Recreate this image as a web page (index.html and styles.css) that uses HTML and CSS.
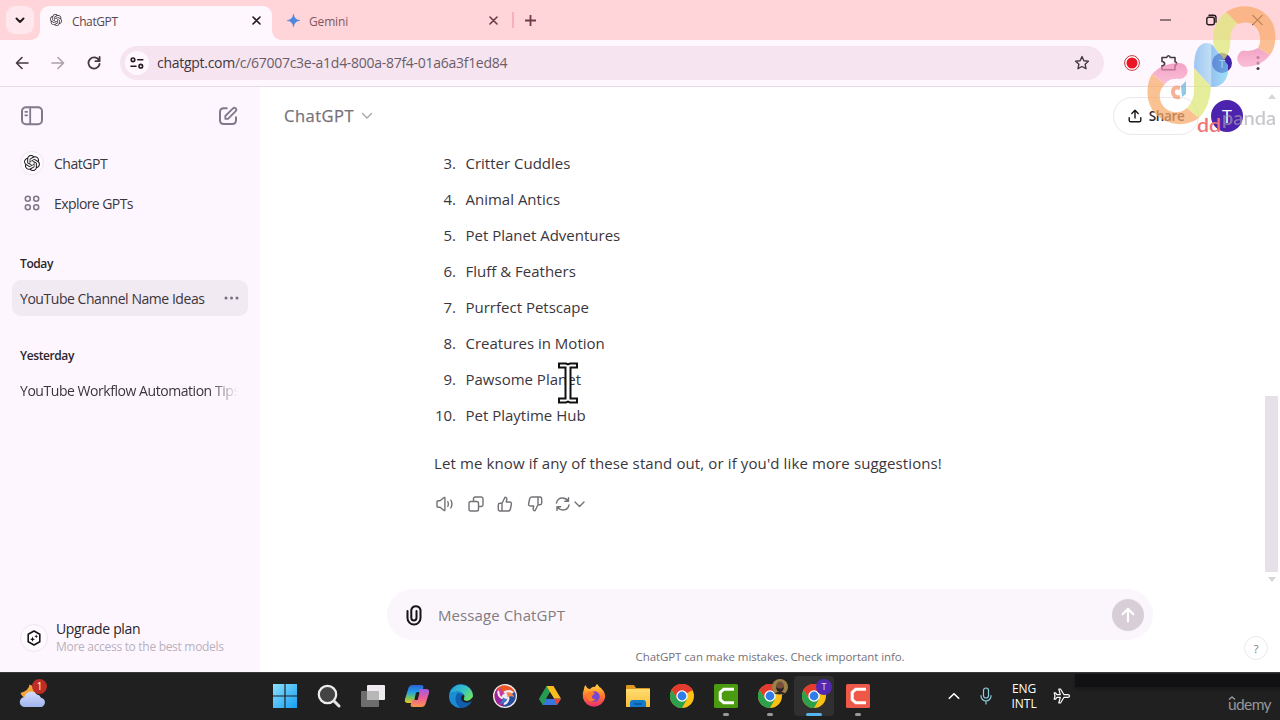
FILE: index.html
```html
<!DOCTYPE html>
<html lang="en">
<head>
<meta charset="utf-8">
<title>ChatGPT</title>
<link rel="stylesheet" href="styles.css">
</head>
<body>
<svg class="defs" width="0" height="0">
  <defs>
    <symbol id="knot" viewBox="0 0 24 24"><path fill="currentColor" d="M22.2819 9.8211a5.9847 5.9847 0 0 0-.5157-4.9108 6.0462 6.0462 0 0 0-6.5098-2.9A6.0651 6.0651 0 0 0 4.9807 4.1818a5.9847 5.9847 0 0 0-3.9977 2.9 6.0462 6.0462 0 0 0 .7427 7.0966 5.98 5.98 0 0 0 .511 4.9107 6.051 6.051 0 0 0 6.5146 2.9001A5.9847 5.9847 0 0 0 13.2599 24a6.0557 6.0557 0 0 0 5.7718-4.2058 5.9894 5.9894 0 0 0 3.9977-2.9001 6.0557 6.0557 0 0 0-.7475-7.0729zm-9.022 12.6081a4.4755 4.4755 0 0 1-2.8764-1.0408l.1419-.0804 4.7783-2.7582a.7948.7948 0 0 0 .3927-.6813v-6.7369l2.02 1.1686a.071.071 0 0 1 .038.052v5.5826a4.504 4.504 0 0 1-4.4945 4.4944zm-9.6607-4.1254a4.4708 4.4708 0 0 1-.5346-3.0137l.142.0852 4.783 2.7582a.7712.7712 0 0 0 .7806 0l5.8428-3.3685v2.3324a.0804.0804 0 0 1-.0332.0615L9.74 19.9502a4.4992 4.4992 0 0 1-6.1408-1.6464zM2.3408 7.8956a4.485 4.485 0 0 1 2.3655-1.9728V11.6a.7664.7664 0 0 0 .3879.6765l5.8144 3.3543-2.0201 1.1685a.0757.0757 0 0 1-.071 0l-4.8303-2.7865A4.504 4.504 0 0 1 2.3408 7.872zm16.5963 3.8558L13.1038 8.364 15.1192 7.2a.0757.0757 0 0 1 .071 0l4.8303 2.7913a4.4944 4.4944 0 0 1-.6765 8.1042v-5.6772a.79.79 0 0 0-.407-.667zm2.0107-3.0231l-.142-.0852-4.7735-2.7818a.7759.7759 0 0 0-.7854 0L9.409 9.2297V6.8974a.0662.0662 0 0 1 .0284-.0615l4.8303-2.7866a4.4992 4.4992 0 0 1 6.6802 4.66zM8.3065 12.863l-2.02-1.1638a.0804.0804 0 0 1-.038-.0567V6.0742a4.4992 4.4992 0 0 1 7.3757-3.4537l-.142.0805L8.704 5.459a.7948.7948 0 0 0-.3927.6813zm1.0976-2.3654l2.602-1.4998 2.6069 1.4998v2.9994l-2.5974 1.4997-2.6067-1.4997Z"/></symbol>
    <symbol id="chrome" viewBox="0 0 24 24">
      <circle cx="12" cy="12" r="12" fill="#fbc116"/>
      <path d="M12 12 1.6 6A12 12 0 0 1 22.4 6Z" fill="#e33b2e"/>
      <path d="M12 6.5H22.7A12 12 0 0 0 1.6 6L7 14.5Z" fill="#e33b2e"/>
      <path d="M1.6 6A12 12 0 0 0 12 24L17 15 7.2 14.7Z" fill="#2da04c"/>
      <circle cx="12" cy="12" r="5.7" fill="#fff"/><circle cx="12" cy="12" r="4.4" fill="#2f7de8"/>
    </symbol>
    <symbol id="camtasia" viewBox="0 0 24 24">
      <rect width="24" height="24" rx="1.5" fill="currentColor"/>
      <path d="M20 5.200H9.800L6.200 8.500v7l3.600 3.300H20" fill="none" stroke="#fff" stroke-width="3"/>
    </symbol>
    <linearGradient id="gWin" x2="1" y2="1"><stop stop-color="#8be0fb"/><stop offset="1" stop-color="#169df3"/></linearGradient>
    <linearGradient id="gCloud" x2="0" y2="1"><stop stop-color="#d3dcfb"/><stop offset="1" stop-color="#9fb5ef"/></linearGradient>
    <linearGradient id="gCopA" x2="0" y2="1"><stop stop-color="#2a62d8"/><stop offset=".4" stop-color="#23a1e6"/><stop offset=".7" stop-color="#72c267"/><stop offset="1" stop-color="#f2c11e"/></linearGradient>
    <linearGradient id="gCopB" x2="0" y2="1"><stop stop-color="#a25be5"/><stop offset=".5" stop-color="#ed5c98"/><stop offset="1" stop-color="#fb974c"/></linearGradient>
    <linearGradient id="gEdge" x2="1" y2=".5"><stop stop-color="#2397dd"/><stop offset=".6" stop-color="#35c1c6"/><stop offset="1" stop-color="#6bdd6b"/></linearGradient>
    <linearGradient id="gFox" x2="0" y2="1"><stop stop-color="#ffdd3c"/><stop offset=".5" stop-color="#ff7a2a"/><stop offset="1" stop-color="#ed2d70"/></linearGradient>
    <linearGradient id="gFolder" x2="0" y2="1"><stop stop-color="#ffdd6f"/><stop offset="1" stop-color="#f6bd3c"/></linearGradient>
  </defs>
</svg>

<div class="screen">
  <header class="tabstrip">
    <button class="tab-search"><svg width="10" height="7" viewBox="0 0 10 7"><path d="M1.500 1.500 5 5l3.500-3.500" class="ln dark w2"/></svg></button>
    <div class="tab active">
      <svg class="favicon" width="12" height="12"><use href="#knot"/></svg>
      <span class="tab-title">ChatGPT</span>
      <svg class="tab-close" width="9" height="9" viewBox="0 0 9 9"><path d="m1 1 7 7M8 1 1 8" class="ln dark w16"/></svg>
    </div>
    <div class="tab idle">
      <svg class="favicon" width="13" height="13" viewBox="0 0 14 14"><path d="M7 0C7.4 4.2 9.8 6.6 14 7 9.8 7.4 7.4 9.8 7 14 6.600 9.800 4.200 7.400 0 7 4.200 6.600 6.600 4.200 7 0Z" fill="#4f86dc" stroke="#4f86dc" stroke-width=".5"/></svg>
      <span class="tab-title">Gemini</span>
      <svg class="tab-close" width="9" height="9" viewBox="0 0 9 9"><path d="m1 1 7 7M8 1 1 8" class="ln maroon w16"/></svg>
    </div>
    <i class="tab-rule"></i>
    <svg class="newtab" width="11" height="11" viewBox="0 0 11 11"><path d="M5.500 .5v10M.5 5.500h10" class="ln maroon w18"/></svg>
    <div class="window-buttons">
      <svg width="11" height="12" viewBox="0 0 11 12"><path d="M.5 6h10" class="ln dark w12"/></svg>
      <svg width="11" height="12" viewBox="0 0 11 12"><rect x=".8" y="3.200" width="7.500" height="7.500" rx="1.800" class="ln dark w14"/><path d="M3 1.200h4.500Q10 1.200 10 3.800V8.300" class="ln dark w14"/></svg>
      <svg width="11" height="12" viewBox="0 0 11 12"><path d="m.8 1.300 9.400 9.400m0-9.400L.8 10.700" class="ln dark w12"/></svg>
    </div>
  </header>

  <div class="toolbar">
    <svg class="nav" width="14" height="14" viewBox="0 0 14 14"><path d="M13 7H1.500M7 1.500 1.500 7 7 12.500" class="ln tool w16"/></svg>
    <svg class="nav" width="14" height="14" viewBox="0 0 14 14"><path d="M1 7h11.500M7 1.500 12.500 7 7 12.500" class="ln faint w16"/></svg>
    <svg class="nav" width="14" height="14" viewBox="0 0 14 14"><path d="M12 4.200A5.600 5.600 0 1 0 12.600 8M12.600 1v4.200H8.400" class="ln tool w18"/></svg>
    <div class="omnibox">
      <span class="site-info"><svg width="14" height="12" viewBox="0 0 14 12"><circle cx="3" cy="2.800" r="1.800" class="ln dark w16"/><path d="M7.800 2.800h5M1 9.200h5" class="ln dark w16"/><circle cx="10.800" cy="9.200" r="1.800" class="ln dark w16"/></svg></span>
      <span class="url"><b>chatgpt.com</b>/c/67007c3e-a1d4-800a-87f4-01a6a3f1ed84</span>
      <svg class="star" width="16" height="16" viewBox="0 0 16 16"><path d="m8 1.600 1.900 4.100 4.500.5-3.300 3 .9 4.500L8 11.500l-4 2.200.9-4.500-3.300-3 4.500-.5Z" class="ln tool w14"/></svg>
    </div>
    <div class="extensions">
      <svg width="16" height="16" viewBox="0 0 16 16"><circle cx="8" cy="8" r="7.400" fill="#fff" stroke="#c8353f"/><circle cx="8" cy="8" r="5.500" fill="#ec1525"/></svg>
      <svg width="18" height="18" viewBox="0 0 18 18"><path d="M2 3.500h4.800q.2-1.800 1.700-1.800t1.700 1.800H15v4.300q1.700.2 1.700 1.700T15 11.200v4.600H2v-3.900q2.600-.2 2.600-2.200T2 7.500Z" class="ln tool w16"/></svg>
      <span class="profile">T</span>
      <svg width="4" height="16" viewBox="0 0 4 16"><g fill="#45393f"><circle cx="2" cy="2.500" r="1.500"/><circle cx="2" cy="8" r="1.500"/><circle cx="2" cy="13.500" r="1.500"/></g></svg>
    </div>
  </div>

  <div class="page">
    <aside class="sidebar">
      <div class="side-top">
        <svg width="22" height="20" viewBox="0 0 22 20"><rect x="1" y="1.200" width="20" height="17" rx="4" class="ln grey w2"/><path d="M9.200 1.500v16.500" class="ln grey w18"/><path d="M4.300 5.800h1.800M4.300 9.300h1.800" class="ln grey w18"/></svg>
        <svg width="20" height="20" viewBox="0 0 20 20"><path d="M8.700 2.300H5.800Q2 2.300 2 6v8.300Q2 18 5.800 18h8.400Q18 18 18 14.300v-3" class="ln grey w2"/><path d="M7.300 12.800V10l7.700-7.600a1.900 1.900 0 0 1 2.700 2.700L10 12.800Z" class="ln grey w18"/></svg>
      </div>
      <div class="side-link"><span class="ring small"><svg width="16" height="16"><use href="#knot"/></svg></span>ChatGPT</div>
      <div class="side-link second"><span class="ring bare"><svg width="16" height="16" viewBox="0 0 16 16"><g class="ln grey w16"><circle cx="3.800" cy="3.800" r="2.500"/><circle cx="12.200" cy="3.800" r="2.500"/><circle cx="3.800" cy="12.200" r="2.500"/><circle cx="12.200" cy="12.200" r="2.500"/></g></svg></span><span class="explore">Explore GPTs</span></div>
      <h3 class="group">Today</h3>
      <div class="chat selected"><span>YouTube Channel Name Ideas</span><svg width="15" height="4" viewBox="0 0 15 4"><g fill="#777079"><circle cx="2" cy="2" r="1.500"/><circle cx="7.500" cy="2" r="1.500"/><circle cx="13" cy="2" r="1.500"/></g></svg></div>
      <h3 class="group later">Yesterday</h3>
      <div class="chat cut"><span>YouTube Workflow Automation Tips</span></div>
      <div class="upgrade">
        <span class="ring large"><svg width="16" height="16" viewBox="0 0 16 16"><path d="m8 1 5.800 3.200v7.600L8 15l-5.800-3.200V4.200Z" class="ln black w16"/><path d="M6.500 6.500 7.200 8.400 9 9.200 7.200 10 6.500 11.800 5.800 10 4 9.200 5.800 8.400ZM10.200 4.400l.5 1.300 1.300.6-1.300.6-.5 1.300-.5-1.300-1.300-.6 1.300-.6Z" fill="#111"/></svg></span>
        <div><p class="up-title">Upgrade plan</p><p class="up-sub">More access to the best models</p></div>
      </div>
    </aside>

    <main class="main">
      <div class="main-head">
        <span class="model">ChatGPT</span>
        <svg class="chev" width="12" height="8" viewBox="0 0 12 8"><path d="m1.500 1.500 4.500 4.500 4.500-4.500" class="ln lightgrey w14"/></svg>
        <span class="share"><svg width="14" height="14" viewBox="0 0 14 14"><path d="M7 9V1.500M3.800 4.500 7 1.300l3.200 3.200M1.200 8.800v2.400q0 1.600 1.600 1.600h8.400q1.600 0 1.600-1.600V8.800" class="ln black w14"/></svg><span>Share</span></span>
        <span class="avatar">T</span>
      </div>
      <div class="answer">
        <ol class="names">
          <li><i>3.</i><span>Critter Cuddles</span></li>
          <li><i>4.</i><span>Animal Antics</span></li>
          <li><i>5.</i><span>Pet Planet Adventures</span></li>
          <li><i>6.</i><span>Fluff &amp; Feathers</span></li>
          <li><i>7.</i><span>Purrfect Petscape</span></li>
          <li><i>8.</i><span>Creatures in Motion</span></li>
          <li><i>9.</i><span>Pawsome Planet</span></li>
          <li><i>10.</i><span>Pet Playtime Hub</span></li>
        </ol>
        <p class="closing">Let me know if any of these stand out, or if you'd like more suggestions!</p>
        <div class="actions">
          <svg width="18" height="16" viewBox="0 0 18 16"><path d="M1 5.800Q1 4.700 2.200 4.700h1.900L8 1.500q.9-.5.9.6v11.800q0 1.100-.9.600l-3.900-3.200H2.200Q1 11.300 1 10.200Z" class="ln mid w14"/><path d="M11.800 5.500q1.300 2.500 0 5M14.800 4q2.200 4 0 8" class="ln mid w14"/></svg>
          <svg width="16" height="16" viewBox="0 0 16 16"><rect x="1" y="5.500" width="9.500" height="9.500" rx="1.800" class="ln mid w14"/><path d="M5.500 5.300V2.800Q5.500 1 7.300 1h6Q15 1 15 2.800v6q0 1.700-1.700 1.700h-2.500" class="ln mid w14"/></svg>
          <svg width="16" height="16" viewBox="0 0 16 16"><path d="M5 7.300 8 1.200q2 .1 1.800 2.300L9.300 6h3.400q2 .2 1.700 2l-1 5q-.4 2-2.300 2H3Q1.300 15 1.300 13.300V9Q1.300 7.300 3 7.300ZM5 7.300V15" class="ln mid w14"/></svg>
          <svg width="16" height="16" viewBox="0 0 16 16"><path d="M11 8.700 8 14.800q-2-.1-1.800-2.300L6.700 10H3.300q-2-.2-1.700-2l1-5q.4-2 2.300-2H13q1.700 0 1.700 1.700V7q0 1.700-1.700 1.700ZM11 8.700V1" class="ln mid w14"/></svg>
          <svg width="30" height="16" viewBox="0 0 30 16"><path d="M1.500 7Q2.500 2 7.500 2q3.500 0 5.700 3M13.500 1.600v3.700H9.800M14 9q-1 5-6 5-3.500 0-5.700-3M2 14.400v-3.700h3.700M20 6l4.500 4.500L29 6" class="ln mid w14"/></svg>
        </div>
      </div>
      <div class="composer">
        <svg width="18" height="22" viewBox="0 0 18 22"><path d="M2.500 7v7a6.500 6.500 0 0 0 13 0V6a4.700 4.700 0 0 0-9.200 0v7.800a2.600 2.600 0 0 0 5.200 0V7" class="ln black w2"/></svg>
        <span class="placeholder">Message ChatGPT</span>
        <span class="send"><svg width="14" height="16" viewBox="0 0 14 16"><path d="M7 14.500V2M1.600 7.200 7 1.800l5.400 5.400" class="ln white w22"/></svg></span>
      </div>
      <p class="notice">ChatGPT can make mistakes. Check important info.</p>
      <span class="help">?</span>
      <div class="scrollbar"></div>
      <svg class="arrow up" width="8" height="5" viewBox="0 0 8 5"><path d="M4 0 8 5H0Z" fill="#d9d4da"/></svg>
      <svg class="arrow down" width="8" height="5" viewBox="0 0 8 5"><path d="M4 5 8 0H0Z" fill="#d9d4da"/></svg>
    </main>
  </div>

  <footer class="taskbar">
    <div class="weather">
      <svg width="32" height="32" viewBox="0 0 32 32"><path d="M11.500 4.500q-.5 6-9 8.500 2 6 9 5 6-1.500 6-7-1-5-6-6.500Z" fill="#f1a63a"/><path d="M7 27a5 5 0 0 1-.5-10A7 7 0 0 1 19 14.500a5 5 0 0 1 4 3.200A4.700 4.700 0 0 1 21.500 27Z" fill="url(#gCloud)"/></svg>
      <span class="count">1</span>
    </div>
    <div class="apps">
      <span class="app"><svg width="24" height="24" viewBox="0 0 24 24"><path d="M0 0h11.400v11.400H0ZM12.600 0H24v11.400H12.600ZM0 12.600h11.400V24H0ZM12.600 12.600H24V24H12.600Z" fill="url(#gWin)"/></svg></span>
      <span class="app"><svg width="24" height="24" viewBox="0 0 24 24"><circle cx="10.500" cy="10.500" r="8.700" fill="#444" stroke="#eee" stroke-width="2.200"/><path d="m17 17 5 5" class="ln silver w3"/></svg></span>
      <span class="app"><svg width="24" height="24" viewBox="0 0 24 24"><rect x="6" y="1" width="18" height="15" rx="1" fill="#eeeaf0"/><rect x="0" y="7" width="18" height="16" rx="1" fill="#6d6d6d"/><path d="M6 7h12v9H6Z" fill="#b7b7b7"/></svg></span>
      <span class="app"><svg width="26" height="26" viewBox="0 0 26 26"><path d="M8.500 2H17q3 0 2.200 3L17.500 9H13l-3 11H4q-4 0-3-4L4.500 5Q5.500 2 8.500 2Z" fill="url(#gCopA)"/><path d="M17.500 24H9q-3 0-2.200-3L8.500 17H13l3-11h6q4 0 3 4l-3.500 11q-1 3-4 3Z" fill="url(#gCopB)"/><path d="m12 9.500-1.600 7.200h3.400l1.700-7.200Z" fill="#202020"/></svg></span>
      <span class="app"><svg width="24" height="24" viewBox="0 0 24 24"><circle cx="12" cy="12" r="12" fill="#0f5fae"/><path d="M.3 10A12 12 0 0 1 24 12q-.5 5-6 5-5-.5-3.500-3.500Q16 9 10 7.500 4 7 .3 10Z" fill="url(#gEdge)"/><path d="M8.300 9Q3.500 17 11 23.900-1 22 .2 10.500 3 7.500 8.300 7.700 14 8 15.200 11.500 12 8.500 8.300 9Z" fill="#1b8dd6"/><path d="M23.300 17q-7.300 3.700-11-1-1.300-3.500 2.200-5.500 1.500 1 .7 3Q13.700 17 18 17q3-.2 6-4 .3 2-.7 4Z" fill="#202020"/></svg></span>
      <span class="app"><svg width="24" height="24" viewBox="0 0 24 24"><circle cx="12" cy="12" r="12" fill="#f3e9f2"/>
        <path id="blade" d="M3.500 5.500A10.700 10.700 0 0 1 22.500 11Q19 4.500 13 6.500 9.500 7.500 9.800 11 6.500 6.500 3.500 5.500Z" fill="#e95828"/>
        <use href="#blade" class="violet" transform="rotate(-120 12 12)"/>
        <path d="M3.500 5.500A10.700 10.700 0 0 1 22.500 11Q19 4.500 13 6.500 9.500 7.500 9.800 11 6.500 6.500 3.500 5.500Z" fill="#9b239c" transform="rotate(-120 12 12)"/>
        <path d="M3.500 5.500A10.700 10.700 0 0 1 22.500 11Q19 4.500 13 6.500 9.500 7.500 9.800 11 6.500 6.500 3.500 5.500Z" fill="#254f9e" transform="rotate(120 12 12)"/>
        <path d="M13 8.500q6-1.500 8.500 5-3.500-2.500-7.300-.3Q15 10 13 8.500Z" fill="#f08345"/>
        <path d="M13 8.500q6-1.500 8.500 5-3.500-2.500-7.300-.3Q15 10 13 8.500Z" fill="#c43aa0" transform="rotate(-120 12 12)"/>
        <path d="M13 8.500q6-1.500 8.500 5-3.500-2.500-7.300-.3Q15 10 13 8.500Z" fill="#3d78c4" transform="rotate(120 12 12)"/></svg></span>
      <span class="app"><svg width="22" height="22" viewBox="0 0 22 22"><path d="M7.500 1h7L11 7.200 4 20 0 13.800Z" fill="#259b4e"/><path d="M7.500 1h7L22 13.800h-7Z" fill="#f9bd20"/><path d="M0 13.800h22L18 20H4Z" fill="#3775e0"/><path d="M0 13.800h7.500L4 20Z" fill="#259b4e"/><path d="M15 13.800h7L18 20Z" fill="#e94235"/><path d="M11 7.200 15 13.800H7Z" fill="#202020"/></svg></span>
      <span class="app"><svg width="24" height="24" viewBox="0 0 24 24"><path d="M2 5q0-2 1.500-4Q5 5 8 5q3-3 5-2 1-2 2-3 2 3 4 4 5 5 4 10A11.300 11.300 0 0 1 1 14q-1-5 1-9Z" fill="url(#gFox)"/><circle cx="12.500" cy="12.500" r="5.200" fill="#7846d4"/><path d="M5 9q4-3 8 0l-3 3q0 4 4 3-4 4-8 1-2-3-1-7Z" fill="#ff7d26"/></svg></span>
      <span class="app"><svg width="24" height="24" viewBox="0 0 24 24"><path d="M0 2q0-1 1-1h7l2 3h13q1 0 1 1v18H0Z" fill="#dd9620"/><path d="M0 5h24v18H0Z" fill="url(#gFolder)"/><path d="M4 23v-4q0-3 3-3h10q3 0 3 3v4Z" fill="#1279cc"/><path d="M8 20h8" stroke="#0a5299" stroke-width="1.500"/></svg></span>
      <span class="app"><svg width="24" height="24"><use href="#chrome"/></svg></span>
      <span class="app running green"><svg width="24" height="24"><use href="#camtasia"/></svg></span>
      <span class="app running"><svg width="24" height="24"><use href="#chrome"/></svg><svg class="face" width="16" height="16" viewBox="0 0 16 16"><circle cx="8" cy="8" r="8" fill="#9b8149"/><ellipse cx="8" cy="7.500" rx="4" ry="5" fill="#77503d"/><path d="M4 8q4 3 8 0-.5 5-4 5T4 8ZM2 15q6-5 12 0Z" fill="#302421"/></svg></span>
      <span class="app running current"><svg width="24" height="24"><use href="#chrome"/></svg><b class="mini">T</b></span>
      <span class="app running red"><svg width="24" height="24"><use href="#camtasia"/></svg></span>
    </div>
    <div class="tray">
      <svg width="12" height="8" viewBox="0 0 12 8"><path d="m1.300 6.300 4.700-4.600 4.700 4.600" class="ln white w16"/></svg>
      <svg class="mic" width="12" height="18" viewBox="0 0 12 18"><rect x="3.500" y="1" width="5" height="10" rx="2.500" class="ln cyan w12"/><path d="M1 8.500v.5a5 5 0 0 0 10 0v-.5M6 14v3" class="ln cyan w12"/></svg>
      <span class="lang">ENG<br>INTL</span>
      <svg class="plane" width="18" height="16" viewBox="0 0 18 16"><path d="M16.500 8q0-1.300-1.800-1.300H11L7.500 1H5.800l1.500 5.700H4L2.500 4.800H1.200L2 8l-.8 3.200h1.300L4 9.300h3.300L5.800 15h1.700L11 9.300h3.700Q16.500 9.300 16.500 8Z" class="ln white w12"/></svg>
    </div>
    <div class="masked"></div>
    <span class="udemy">udemy<svg width="8" height="4" viewBox="0 0 8 4"><path d="M1 3.500 4 1l3 2.500" fill="none" stroke="#969696" stroke-width="1.500"/></svg></span>
  </footer>

  <svg class="brand" width="150" height="136" viewBox="1130 0 150 136">
    <defs>
      <linearGradient id="bBlue"><stop stop-color="#7bb4f2"/><stop offset=".5" stop-color="#a9d5ef"/><stop offset=".52" stop-color="#6fb0ee"/><stop offset="1" stop-color="#7dd6f5"/></linearGradient>
      <linearGradient id="bPink" x2="0" y2="1"><stop stop-color="#ef83b0"/><stop offset="1" stop-color="#f7abc7"/></linearGradient>
    </defs>
    <g opacity=".72">
      <path d="M1226 12 1238 23Q1230 29 1230.500 38 1231 52 1224 60L1214 47Q1209 26 1226 12Z" fill="#dfe876"/>
      <path d="M1226 12C1242 1 1265 6 1273 24 1277 36 1276 47 1270 55L1258 48C1264 37 1257 23 1247 22.500Q1242 22 1238 24Z" fill="#f9aa6a"/>
      <path d="M1258 48 1270 55Q1261 67 1245 67A8.500 8.500 0 0 1 1243 50.500Q1252 52 1258 48Z" fill="url(#bPink)"/>
      <path d="M1194 68Q1194 44 1206 43 1212 43 1214 47L1224 60 1228 65V73Q1225 87 1211 87Z" fill="url(#bBlue)"/>
      <path d="M1194 68 1211 87Q1210 107 1199 118L1187 108Q1194 101 1194 90Z" fill="#dfe876"/>
      <path d="M1187 108 1199 118Q1189 125 1177 124 1153 121 1148 99 1146 84 1152 74L1165 84A15 15 0 0 0 1187 108Z" fill="#f9aa6a"/>
      <path d="M1152 74Q1162 63 1179 63A8 8 0 0 1 1180 79Q1169 78 1165 84Z" fill="url(#bPink)"/>
      <path d="M1180 88Q1173 86 1173 92T1180 97" fill="none" stroke="#f19770" stroke-width="4"/><path d="M1181 86 1186 81V94L1182 97Z" fill="#65b5dc"/>
    </g>
    <text x="1197" y="132" class="brand-text" textLength="24" lengthAdjust="spacingAndGlyphs" fill="#f07272">dd</text>
    <text x="1222" y="125" class="brand-text" textLength="54" lengthAdjust="spacingAndGlyphs" fill="#aaa5ad" opacity=".62">panda</text>
  </svg>
  <svg class="caret" width="20" height="42" viewBox="0 0 20 42"><path d="M1 1.500h7l2 1 2-1h7v4h-6.500v31H19v4h-7l-2-1-2 1H1v-4h6.500v-31H1Z" fill="#fff" stroke="#111" stroke-width="2"/></svg>
</div>
</body>
</html>
```
FILE: styles.css
```css
* { box-sizing: border-box; }
body { margin: 0; font-family: "Open Sans", "Noto Sans", sans-serif; color: #3b363c; }
p, h3, ol { margin: 0; padding: 0; }
svg { display: block; flex: none; }
button { border: 0; padding: 0; }
.defs { position: absolute; }
.screen { position: relative; width: 1280px; height: 720px; overflow: hidden; display: flex; flex-direction: column; background: #fff; }

.ln { fill: none; stroke-linecap: round; stroke-linejoin: round; }
.dark { stroke: #251a20; } .maroon { stroke: #6d3c46; } .tool { stroke: #45393f; } .faint { stroke: #aaa0a9; }
.grey { stroke: #81798a; } .lightgrey { stroke: #aaa6ab; } .mid { stroke: #747176; } .black { stroke: #141414; }
.white { stroke: #fff; } .silver { stroke: #e5e5e5; } .cyan { stroke: #8ed0dc; }
.w12 { stroke-width: 1.2; } .w14 { stroke-width: 1.4; } .w16 { stroke-width: 1.6; } .w18 { stroke-width: 1.8; }
.w2 { stroke-width: 2; } .w22 { stroke-width: 2.2; } .w3 { stroke-width: 3; }

/* browser window */
.tabstrip { height: 40px; background: #ffd5d9; display: flex; align-items: center; flex: none; }
.tab-search { width: 28px; height: 28px; margin: 0 6px; border-radius: 9px; background: #ffe8ed; display: grid; place-items: center; }
.tab { display: flex; align-items: center; }
.tab.active { position: relative; width: 232px; height: 34px; margin-top: 6px; padding: 0 11px 6px 10px; border-radius: 9px 9px 0 0; background: #fff7fe; }
.tab.active::before, .tab.active::after { content: ""; position: absolute; bottom: 0; width: 9px; height: 9px; }
.tab.active::before { left: -9px; background: radial-gradient(circle at 0 0, transparent 8.5px, #fff7fe 9px); }
.tab.active::after { right: -9px; background: radial-gradient(circle at 100% 0, transparent 8.5px, #fff7fe 9px); }
.tab-title { font-size: 12px; margin-left: 10px; padding-top: 2px; letter-spacing: -.4px; color: #544750; }
.tab.idle { width: 226px; padding-left: 15px; }
.idle .tab-title { color: #83575f; margin-left: 9px; letter-spacing: -.15px; }
.tab-close { margin-left: auto; }
.tab-rule { width: 2px; height: 16px; margin-left: 14px; background: #f9b0bd; }
.newtab { margin-left: 10.500px; }
.window-buttons { margin-left: auto; margin-right: 17.500px; display: flex; gap: 35px; }
.toolbar { height: 47px; flex: none; background: #fff7fe; border-bottom: 1px solid #e6dce6; display: flex; align-items: center; padding: 0 20px 0 15px; }
.nav { margin-right: 22px; }
.omnibox { width: 985px; height: 34px; margin-left: -3px; border-radius: 17px; background: #f6e5f1; display: flex; align-items: center; padding: 0 14px 0 5px; }
.site-info { width: 24px; height: 24px; border-radius: 50%; background: #fff7fe; display: grid; place-items: center; }
.url { font-size: 14px; letter-spacing: -.28px; margin-left: 8px; padding-bottom: 1px; color: #6b5d68; }
.url b { font-weight: 400; color: #40353d; }
.star { margin-left: auto; }
.extensions { display: flex; align-items: center; margin-left: 20px; }
.extensions > :nth-child(2) { margin-left: 20px; }
.profile { width: 20px; height: 20px; margin: 0 24px 0 34px; border-radius: 50%; background: #3e27a9; color: #fff; font-size: 11px; display: grid; place-items: center; }

/* conversation list */
.page { height: 585px; display: flex; }
.sidebar { width: 260px; background: #fdf6ff; display: flex; flex-direction: column; padding: 19px 12px 17px; font-size: 14px; letter-spacing: -.45px; }
.side-top { height: 20px; display: flex; justify-content: space-between; padding: 0 10px 0 9px; }
.side-link { height: 40px; display: flex; align-items: center; gap: 10px; padding-left: 8px; margin-top: 17px; }
.side-link.second { margin-top: 0; }
.explore { letter-spacing: -.58px; padding-top: 1px; }
.ring { display: grid; place-items: center; border: 1px solid #eee5ef; border-radius: 50%; background: #fffaff; color: #222; }
.small { width: 24px; height: 24px; } .bare { width: 24px; height: 24px; border: 0; background: none; } .large { width: 28px; height: 28px; }
.group { margin: 32px 8px 0; height: 18px; font-size: 12px; line-height: 18px; font-weight: 600; letter-spacing: -.4px; color: #29242a; }
.chat { height: 36px; margin-top: 7px; padding: 0 9px 0 8px; border-radius: 9px; display: flex; align-items: center; justify-content: space-between; white-space: nowrap; }
.selected { background: #f1eaf3; }
.group.later { margin-top: 31px; }
.chat.cut { margin-top: 7px; }
.cut span { width: 230px; flex: none; -webkit-mask-image: linear-gradient(90deg, #000 190px, transparent 218px); mask-image: linear-gradient(90deg, #000 190px, transparent 218px); }
.upgrade { margin-top: auto; display: flex; align-items: center; gap: 8px; padding-left: 8px; }
.up-title { line-height: 18px; letter-spacing: -.35px; color: #29242c; }
.up-sub { font-size: 12px; line-height: 17px; letter-spacing: -.3px; color: #b9b1bb; }

/* conversation */
.main { position: relative; width: 1020px; display: flex; flex-direction: column; }
.main-head { height: 58px; display: flex; align-items: center; padding: 0 37px 0 24px; }
.model { font-size: 16.500px; letter-spacing: .5px; font-weight: 500; line-height: 22px; color: #77727a; -webkit-text-stroke: .25px #77727a; }
.chev { margin-left: 7px; }
.share { width: 86px; height: 38px; margin-left: auto; border: 1px solid #ece6ed; border-radius: 19px; display: flex; align-items: center; justify-content: center; gap: 7px; font-size: 13.500px; font-weight: 600; letter-spacing: -.35px; color: #2c282e; }
.avatar { width: 32px; height: 32px; margin-left: 12px; border-radius: 50%; background: #4b23ae; color: #fff; font-size: 18px; display: grid; place-items: center; }
.answer { padding-left: 174px; height: 444px; font-size: 15px; }
.names { list-style: none; }
.names li { display: flex; height: 36px; align-items: center; }
.names i { width: 22px; margin-right: 9.500px; font-style: normal; text-align: right; }
.closing { height: 28px; line-height: 28px; margin-top: 16px; letter-spacing: .115px; }
.actions { display: flex; gap: 14px; margin: 19px 0 0 2px; }
.actions svg + svg { margin-left: -.3px; }
.actions svg:last-child { margin-left: -2px; }
.composer { width: 766px; height: 51px; margin-left: 127px; border-radius: 26px; background: #fbf5fc; display: flex; align-items: center; padding: 0 9px 0 18px; }
.placeholder { font-size: 15px; margin-left: 15px; letter-spacing: .1px; color: #817c83; }
.send { width: 32px; height: 32px; margin-left: auto; border-radius: 50%; background: #d7ced8; display: grid; place-items: center; }
.notice { margin-top: 8px; text-align: center; font-size: 11.500px; letter-spacing: -.09px; line-height: 18px; color: #77727a; }
.help { position: absolute; right: 12px; bottom: 12px; width: 24px; height: 24px; border: 1px solid #ece8ed; border-radius: 50%; display: grid; place-items: center; font-size: 11px; color: #777; }
.scrollbar { position: absolute; right: 2px; top: 309px; width: 13px; height: 176px; background: #e6e1e8; }
.arrow { position: absolute; right: 4px; } .up { top: 7px; } .down { top: 490px; }

/* desktop bar */
.taskbar { position: relative; height: 48px; background: #202020; border-top: 1px solid #3a383a; display: flex; align-items: center; padding-bottom: 2px; }
.weather { position: relative; width: 32px; margin-left: 18px; }
.count { position: absolute; left: 14px; top: -1px; width: 15px; height: 15px; border-radius: 50%; background: #bd2c25; color: #fff; font-size: 10px; line-height: 15px; text-align: center; }
.apps { display: flex; margin-left: 213px; }
.app { position: relative; width: 44.080px; height: 44px; display: grid; place-items: center; }
.running::after { content: ""; position: absolute; bottom: 2px; left: 19px; width: 6px; height: 3px; border-radius: 2px; background: #999; }
.green { color: #4a9b10; } .red { color: #ee5849; }
.current::before { content: ""; position: absolute; inset: 2px; border-radius: 4px; background: #303030; }
.current svg { position: relative; }
.current::after { left: 14px; width: 16px; background: #55b4ee; }
.face, .current .mini { position: absolute; right: 4px; top: 5px; }
.current .mini { width: 16px; height: 16px; border-radius: 50%; background: #5229b1; color: #e5dcff; font-size: 9px; line-height: 16px; text-align: center; font-weight: 400; }
.tray { display: flex; align-items: center; margin-left: 68px; color: #fff; }
.mic { margin-left: 20px; }
.lang { width: 32px; margin-left: 16px; text-align: center; font-size: 12px; line-height: 15px; }
.plane { margin-left: 13px; }
.masked { position: absolute; right: 0; top: 1px; width: 205px; height: 13px; background: #111013; box-shadow: 0 2px 3px #19181a; }
.udemy { position: absolute; right: 9px; bottom: 6px; font-family: Lato, sans-serif; font-size: 15.500px; letter-spacing: -.6px; line-height: 20px; color: #969696; }
.udemy svg { position: absolute; left: 0; top: 2px; }
.brand { position: absolute; right: 0; top: 0; }
.brand-text { font: 600 20px Lato, sans-serif; }
.caret { position: absolute; left: 558px; top: 362px; }
```
